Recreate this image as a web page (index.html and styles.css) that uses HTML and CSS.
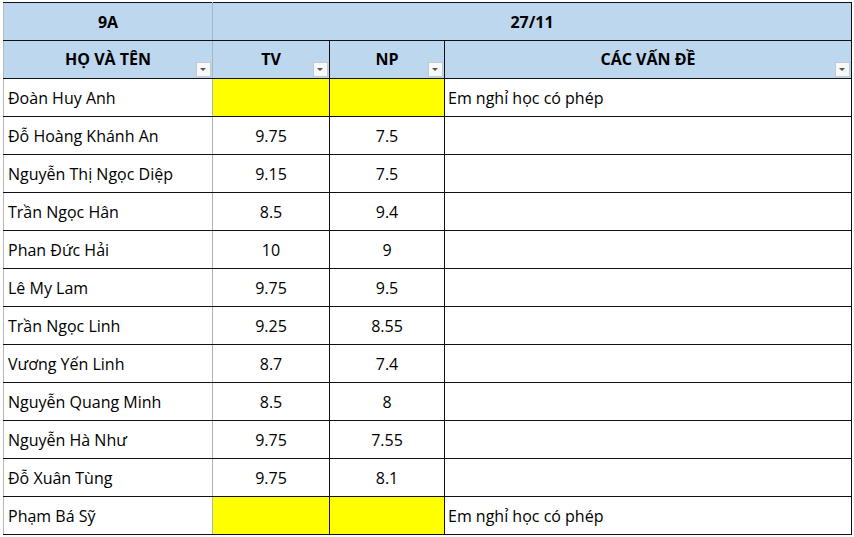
FILE: index.html
```html
<!DOCTYPE html>
<html lang="vi">
<head>
<meta charset="utf-8">
<link rel="stylesheet" href="styles.css">
</head>
<body>
<table class="sheet">
  <colgroup>
    <col class="c-name"><col class="c-tv"><col class="c-np"><col class="c-note">
  </colgroup>
  <thead>
    <tr class="hd1">
      <th class="gl-r">9A</th>
      <th colspan="3">27/11</th>
    </tr>
    <tr class="hd2">
      <th class="gl-r"><span class="lbl">HỌ VÀ TÊN</span><span class="flt"></span></th>
      <th><span class="lbl">TV</span><span class="flt"></span></th>
      <th><span class="lbl">NP</span><span class="flt"></span></th>
      <th><span class="lbl">CÁC VẤN ĐỀ</span><span class="flt"></span></th>
    </tr>
  </thead>
  <tbody>
    <tr><td class="name gl-r">Đoàn Huy Anh</td><td class="num yel"></td><td class="num yel"></td><td class="note">Em nghỉ học có phép</td></tr>
    <tr><td class="name gl-r">Đỗ Hoàng Khánh An</td><td class="num">9.75</td><td class="num">7.5</td><td class="note"></td></tr>
    <tr><td class="name gl-r">Nguyễn Thị Ngọc Diệp</td><td class="num">9.15</td><td class="num">7.5</td><td class="note"></td></tr>
    <tr><td class="name gl-r">Trần Ngọc Hân</td><td class="num">8.5</td><td class="num">9.4</td><td class="note"></td></tr>
    <tr><td class="name gl-r">Phan Đức Hải</td><td class="num">10</td><td class="num">9</td><td class="note"></td></tr>
    <tr><td class="name gl-r">Lê My Lam</td><td class="num">9.75</td><td class="num">9.5</td><td class="note"></td></tr>
    <tr><td class="name gl-r">Trần Ngọc Linh</td><td class="num">9.25</td><td class="num">8.55</td><td class="note"></td></tr>
    <tr><td class="name gl-r">Vương Yến Linh</td><td class="num">8.7</td><td class="num">7.4</td><td class="note"></td></tr>
    <tr><td class="name gl-r">Nguyễn Quang Minh</td><td class="num">8.5</td><td class="num">8</td><td class="note"></td></tr>
    <tr><td class="name gl-r">Nguyễn Hà Như</td><td class="num">9.75</td><td class="num">7.55</td><td class="note"></td></tr>
    <tr><td class="name gl-r">Đỗ Xuân Tùng</td><td class="num">9.75</td><td class="num">8.1</td><td class="note"></td></tr>
    <tr><td class="name gl-r">Phạm Bá Sỹ</td><td class="num yel"></td><td class="num yel"></td><td class="note">Em nghỉ học có phép</td></tr>
  </tbody>
</table>
</body>
</html>
```

FILE: styles.css
```css
html, body {
  margin: 0;
  padding: 0;
  background: #ffffff;
}
body {
  padding: 2px 0 0 3px;
  font-family: "Open Sans", "Liberation Sans", sans-serif;
  color: #000;
}
.sheet {
  border-collapse: collapse;
  table-layout: fixed;
  width: 848px;
  border-left: 1px solid #b8b8b8;
}
.c-name { width: 209px; }
.c-tv { width: 117px; }
.c-np { width: 115px; }
.c-note { width: 407px; }

.sheet th, .sheet td {
  border: 1px solid #111;
  height: 38px;
  padding: 0;
  box-sizing: border-box;
  font-size: 16px;
  white-space: nowrap;
  overflow: hidden;
}
.sheet th {
  background: #bdd7ee;
  font-weight: 700;
  text-align: center;
  position: relative;
}
.sheet th:first-child, .sheet td:first-child { border-left-color: #b8b8b8; }
.sheet .gl-r { border-right-color: #a9b4bd; }
.hd2 .lbl {
  display: block;
  padding-bottom: 1px;
}
.flt {
  position: absolute;
  right: 1px;
  bottom: 1px;
  width: 15px;
  height: 15px;
  box-sizing: border-box;
  background: #f7f8f9;
  border: 1px solid #c4c9cd;
}
.flt::after {
  content: "";
  position: absolute;
  left: 3px;
  top: 5px;
  border-left: 3.5px solid transparent;
  border-right: 3.5px solid transparent;
  border-top: 3.5px solid #555;
}
.name {
  text-align: left;
  padding-left: 4px !important;
}
.num { text-align: center; }
.note { padding-left: 3px !important; }
.yel { background: #ffff00; }
```
